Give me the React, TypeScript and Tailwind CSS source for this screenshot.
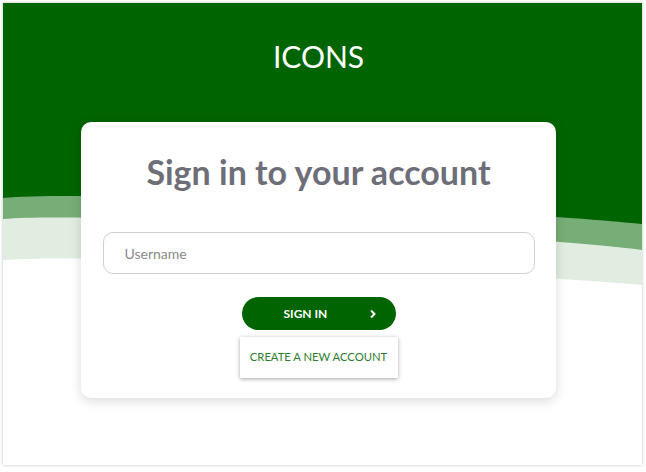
import React from "react";

export default function App() {
  return (
    <div className="w-[646px] h-[472px] bg-white" style={{ fontFamily: "Lato, 'Noto Sans', sans-serif" }}>
      <div className="relative ml-[3px] mt-[3px] w-[639px] h-[462px] bg-white overflow-hidden shadow-[0_0_3px_rgba(0,0,0,0.25)]">
        <svg className="absolute inset-0" width="639" height="462" viewBox="0 0 639 462">
          <path d="M0,257 C100,249 539,273 639,282 L639,0 L0,0 Z" fill="#e1ede1" />
          <path d="M0,216 C100,208 539,234 639,247 L639,0 L0,0 Z" fill="#77ad77" />
          <path d="M0,195 C100,186 539,210 639,221 L639,0 L0,0 Z" fill="#006400" />
        </svg>
        <div className="relative flex flex-col items-center pr-[8px]">
          <div className="mt-[33px] h-[40px] leading-[40px] text-[30px] text-white">ICONS</div>
          <div className="mt-[46px] w-[475px] h-[276px] rounded-[10px] bg-white shadow-[0_3px_12px_rgba(0,0,0,0.15)] flex flex-col items-center">
            <div className="mt-[30px] h-[40px] leading-[40px] text-[34px] font-bold text-[#6e6e78]">Sign in to your account</div>
            <div className="mt-[40px] w-[432px] h-[42px] rounded-[10px] border border-[#d0d0d0] flex items-center pl-[21px] text-[14px] text-[#8a8a8a]">
              Username
            </div>
            <div className="mt-[23px] w-[154px] h-[33px] rounded-full bg-[#006400] flex items-center text-white text-[12px] font-bold">
              <span className="ml-[42px]">SIGN IN</span>
              <svg className="ml-[42px]" width="8" height="10" viewBox="0 0 8 10">
                <path d="M2 1.5 L5.5 5 L2 8.5" fill="none" stroke="white" strokeWidth="2" />
              </svg>
            </div>
            <div className="mt-[7px] w-[158px] h-[41px] bg-white shadow-[0_1px_4px_rgba(0,0,0,0.35)] flex items-center justify-center text-[11.25px] text-[#2e7d2e]">
              CREATE A NEW ACCOUNT
            </div>
          </div>
        </div>
      </div>
    </div>
  );
}
